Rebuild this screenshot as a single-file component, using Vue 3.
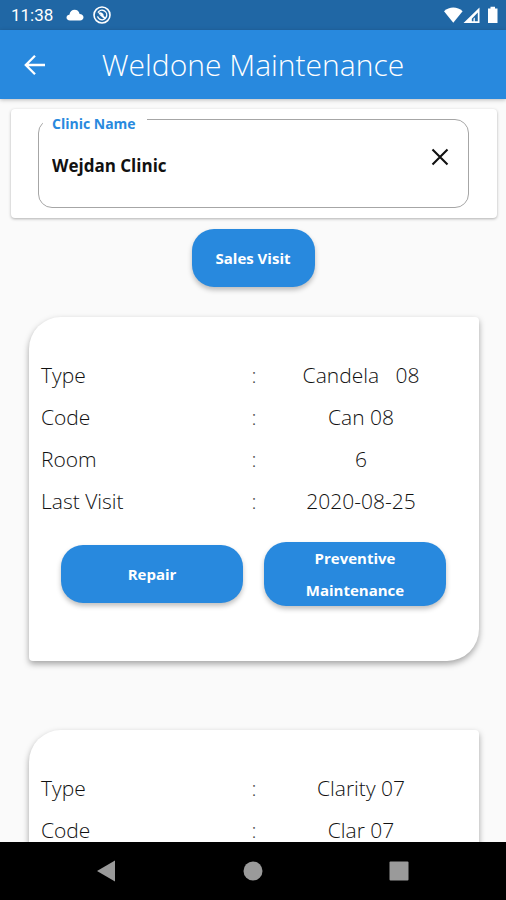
<script setup>
import { ref } from 'vue'

const clinic = ref('Wejdan Clinic')

const devices = [
  {
    id: 1,
    rows: [
      ['Type', 'Candela   08'],
      ['Code', 'Can 08'],
      ['Room', '6'],
      ['Last Visit', '2020-08-25'],
    ],
  },
  {
    id: 2,
    rows: [
      ['Type', 'Clarity 07'],
      ['Code', 'Clar 07'],
    ],
  },
]
</script>

<template>
  <div class="screen">
    <div class="status">
      <span class="clock">11:38</span>
      <svg class="cloud" width="18" height="12" viewBox="0 0 18 12">
        <path fill="#fff" d="M4 11.5C1.800 11.500.5 10.200.5 8.600c0-1.700 1.300-2.800 2.900-2.900C4 2.500 6 .8 8.600.8c2.600 0 4.500 1.600 5 4.100 2.300.1 3.900 1.500 3.900 3.400 0 1.900-1.400 3.200-3.400 3.200z" />
      </svg>
      <svg width="18" height="18" viewBox="0 0 18 18" fill="none" stroke="#fff">
        <circle cx="9" cy="9" r="8" stroke-width="1.600" />
        <circle cx="9" cy="9" r="4.700" stroke-width="1.400" stroke-dasharray="25 4.500" transform="rotate(-150 9 9)" />
        <path stroke-width="1.800" d="M5.800 7.600c2-.9 3.800.2 4.200 2.200M7.200 8.200l5.300 4.600" />
      </svg>
      <span class="spacer"></span>
      <svg width="54" height="18" viewBox="0 0 54 18">
        <path fill="#fff" d="M0 5.200C5.200.3 13.400.3 18.600 5.200L9.300 16.700z" />
        <path fill="#fff" fill-rule="evenodd" d="M35.500 1.500V17H19.500zM33.800 6.500l-6 6.300V15.300h1.700v-2.500l1.300-1.400v3.900h3z" />
        <path fill="#fff" d="M46.500.8h4.500v1.700h2.500V17h-9.500V2.500h2.500z" />
      </svg>
    </div>

    <header class="appbar">
      <button class="back" type="button" aria-label="Back">
        <svg width="22" height="22" viewBox="0 0 22 22" fill="none" stroke="#fff" stroke-width="2.300">
          <path d="M21 11H2.500M11 1.800L1.800 11l9.200 9.200" />
        </svg>
      </button>
      <h1>Weldone Maintenance</h1>
    </header>

    <main class="content">
      <section class="search">
        <fieldset class="field">
          <legend><label for="clinic">Clinic Name</label></legend>
          <div class="field-row">
            <input id="clinic" v-model="clinic" type="text" />
            <button class="clear" type="button" aria-label="Clear" @click="clinic = ''">
              <svg width="18" height="18" viewBox="0 0 18 18" stroke="#111" stroke-width="2.100">
                <path d="M1.500 1.500l15 15M16.500 1.500l-15 15" />
              </svg>
            </button>
          </div>
        </fieldset>
      </section>

      <button class="action sales" type="button">Sales Visit</button>

      <article v-for="device in devices" :key="device.id" class="card">
        <table>
          <tbody>
            <tr v-for="[label, value] in device.rows" :key="label">
              <th scope="row">{{ label }}</th>
              <td class="colon">:</td>
              <td class="value">{{ value }}</td>
            </tr>
          </tbody>
        </table>
        <div class="actions">
          <button class="action" type="button">Repair</button>
          <button class="action" type="button">Preventive Maintenance</button>
        </div>
      </article>
    </main>

    <nav class="navbar">
      <button type="button" aria-label="Back">
        <svg width="20" height="22" viewBox="0 0 20 22"><path fill="#9a9a9a" d="M18 .5v21L0 11z" /></svg>
      </button>
      <button type="button" aria-label="Home">
        <svg width="20" height="20" viewBox="0 0 20 20"><circle cx="10" cy="10" r="9.500" fill="#9a9a9a" /></svg>
      </button>
      <button type="button" aria-label="Overview">
        <svg width="20" height="20" viewBox="0 0 20 20"><rect x=".5" y=".5" width="19" height="19" rx="1" fill="#9a9a9a" /></svg>
      </button>
    </nav>
  </div>
</template>

<style>
body {
  background: #fafafa;
}
</style>

<style scoped>
.screen {
  display: flex;
  flex-direction: column;
  height: 100vh;
  overflow: hidden;
  background: #fafafa;
  color: #111;
  font-family: "Open Sans", "Noto Sans", sans-serif;
}
button {
  border: 0;
  padding: 0;
  background: none;
  font: inherit;
}
svg {
  display: block;
}
.status {
  flex: none;
  display: flex;
  align-items: center;
  height: 30px;
  padding: 0 8px 0 11px;
  background: #2067a5;
}
.clock {
  color: #fff;
  font-family: Roboto, sans-serif;
  font-size: 17px;
}
.cloud {
  margin: 0 9px 0 13px;
}
.spacer {
  flex: 1;
}
.appbar {
  flex: none;
  display: grid;
  grid-template-columns: 70px 1fr 70px;
  align-items: center;
  height: 69px;
  background: #2889de;
  box-shadow: 0 1px 4px rgba(0, 0, 0, 0.25);
}
.back {
  display: grid;
  place-items: center;
  height: 48px;
}
h1 {
  margin: 0;
  color: #fff;
  font-size: 30px;
  font-weight: 300;
  line-height: 40px;
  text-align: center;
  white-space: nowrap;
}
.content {
  flex: 1;
  min-height: 0;
  overflow-y: auto;
  scrollbar-width: none;
}
.search {
  margin: 10px 9px 0 11px;
  padding: 0 28px 10px 27px;
  border-radius: 4px;
  background: #fff;
  box-shadow: 0 1px 3px rgba(0, 0, 0, 0.3);
}
.field {
  min-width: 0;
  margin: 0;
  padding: 0;
  border: 1px solid #a6a6a6;
  border-radius: 14px;
}
legend {
  margin-left: 4px;
  padding: 9px 11px 0 9px;
  color: #2889de;
  font-size: 14px;
  font-weight: 700;
  line-height: 12px;
}
.field-row {
  display: flex;
  align-items: flex-start;
  padding: 0 1px 7px 13px;
}
input {
  flex: 1;
  min-width: 0;
  height: 70px;
  padding: 0;
  border: 0;
  outline: 0;
  background: none;
  color: #111;
  font: inherit;
  font-size: 17px;
  font-weight: 700;
}
.clear {
  display: grid;
  place-items: center;
  width: 54px;
  height: 54px;
}
.action {
  min-height: 58px;
  padding: 0 20px;
  border-radius: 22px;
  background: #2889de;
  box-shadow: 0 3px 5px rgba(0, 0, 0, 0.25);
  color: #fff;
  font-size: 15px;
  font-weight: 700;
  line-height: 32px;
}
.sales {
  display: block;
  width: 123px;
  margin: 11px auto 30px;
}
.card {
  margin: 0 27px 69px 29px;
  padding: 37px 12px 55px;
  border-radius: 32px 4px 32px 4px;
  background: #fff;
  box-shadow: 0 3px 6px rgba(0, 0, 0, 0.35);
}
table {
  width: 100%;
  border-collapse: collapse;
  table-layout: fixed;
  font-size: 21px;
  font-weight: 300;
  line-height: 22px;
}
tr {
  height: 42px;
}
th,
td {
  padding: 0;
  font-weight: inherit;
  text-align: left;
}
.colon {
  width: 8px;
  color: #444;
  text-align: center;
}
.value {
  padding-right: 3px;
  text-align: center;
  white-space: pre;
}
.actions {
  display: grid;
  grid-template-columns: 1fr 1fr;
  align-items: center;
  gap: 21px;
  padding: 20px 21px 0 20px;
}
.navbar {
  flex: none;
  display: grid;
  grid-template-columns: repeat(3, 1fr);
  height: 58px;
  padding: 0 34px;
  background: #000;
}
.navbar button {
  display: grid;
  place-items: center;
}
</style>
